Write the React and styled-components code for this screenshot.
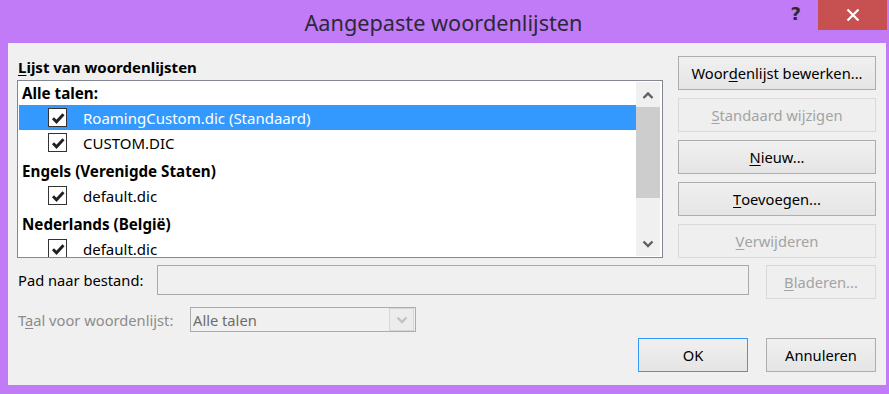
import React from "react";
import styled, { createGlobalStyle } from "styled-components";

const GlobalStyle = createGlobalStyle`
  html, body {
    margin: 0;
    padding: 0;
    background: #c27bf7;
    font-family: "Noto Sans", "Open Sans", sans-serif;
  }
`;

const Window = styled.div`
  display: flex;
  flex-direction: column;
  width: 889px;
  height: 394px;
  background: #c27bf7;
`;

const TitleBar = styled.div`
  display: grid;
  grid-template-columns: 1fr auto 1fr;
  height: 43px;
  padding-right: 2px;
`;

const Title = styled.div`
  grid-column: 2;
  align-self: center;
  font-size: 21.7px;
  color: #2b2838;
  padding-top: 1px;
`;

const Controls = styled.div`
  grid-column: 3;
  display: flex;
  justify-content: flex-end;
  align-items: flex-start;
`;

const Help = styled.div`
  font-family: "DejaVu Sans", sans-serif;
  font-weight: bold;
  font-size: 18px;
  color: #2b2b2b;
  margin-top: 3px;
  margin-right: 17px;
`;

const Close = styled.div`
  display: flex;
  align-items: center;
  justify-content: center;
  width: 69px;
  height: 30px;
  background: #c75050;
`;

const Content = styled.div`
  flex: 1;
  display: flex;
  flex-direction: column;
  margin: 0 3px 9px 8px;
  padding: 13px 10px 13px 9px;
  background: #f0f0f0;
  color: #000;
  font-size: 14.7px;
`;

const Upper = styled.div`
  display: grid;
  grid-template-columns: 1fr 198px;
  column-gap: 15px;
`;

const ListColumn = styled.div`
  display: flex;
  flex-direction: column;
`;

const GroupLabel = styled.div`
  font-weight: bold;
  font-size: 15px;
  line-height: 20px;
  margin: 1px 0 3px 1px;
`;

const Key = styled.span`
  text-decoration: underline;
  text-underline-offset: 2px;
`;

const ListBox = styled.div`
  display: flex;
  height: 176px;
  border: 1px solid #828790;
  background: #fff;
  overflow: hidden;
`;

const Items = styled.div`
  flex: 1;
  padding: 0 0 0 1px;
`;

const Header = styled.div`
  display: flex;
  align-items: center;
  box-sizing: border-box;
  height: ${(p) => (p.$first ? 24 : 28)}px;
  padding: ${(p) => (p.$first ? 0 : 4)}px 0 0 3px;
  font-weight: bold;
  font-size: 15.2px;
`;

const Item = styled.div`
  display: flex;
  align-items: center;
  gap: 16px;
  height: 25px;
  padding-left: 29px;
  background: ${(p) => (p.$selected ? "#3399ff" : "transparent")};
  color: ${(p) => (p.$selected ? "#fff" : "#000")};
  font-size: 15px;
`;

const Box = styled.div`
  display: flex;
  align-items: center;
  justify-content: center;
  width: 17px;
  height: 17px;
  border: 1px solid #333;
  background: #fff;
`;

const ScrollBar = styled.div`
  display: flex;
  flex-direction: column;
  width: 24px;
  margin: 1px 2px 1px 0;
  background: #f0f0f0;
`;

const Arrow = styled.div`
  display: flex;
  align-items: center;
  justify-content: center;
  height: 25px;
`;

const Thumb = styled.div`
  height: 91px;
  background: #cdcdcd;
`;

const Track = styled.div`
  flex: 1;
`;

const ButtonColumn = styled.div`
  display: flex;
  flex-direction: column;
  gap: 8px;
`;

const Button = styled.div`
  display: flex;
  align-items: center;
  justify-content: center;
  box-sizing: border-box;
  height: 34px;
  width: ${(p) => p.$width || "auto"};
  border: 1px solid ${(p) => (p.$disabled ? "#d9d9d9" : p.$default ? "#3399ff" : "#adadad")};
  background: ${(p) =>
    p.$disabled ? "#efefef" : "linear-gradient(#f0f0f0, #e5e5e5)"};
  color: ${(p) => (p.$disabled ? "#a3a3a3" : "#000")};
  white-space: nowrap;
`;

const PathRow = styled.div`
  display: grid;
  grid-template-columns: 123px 1fr 110px;
  column-gap: 17px;
  align-items: start;
  margin-top: 7px;
`;

const FieldLabel = styled.div`
  align-self: center;
  padding-left: 1px;
  white-space: nowrap;
  color: ${(p) => (p.$disabled ? "#8c8c8c" : "#000")};
  margin-top: ${(p) => p.$offset || 0}px;
`;

const TextField = styled.div`
  height: 28px;
  border: 1px solid #a9a9a9;
  background: #f0f0f0;
`;

const LangRow = styled.div`
  display: grid;
  grid-template-columns: 173px 226px;
  align-items: center;
  margin-top: 8px;
`;

const Select = styled.div`
  display: flex;
  align-items: center;
  box-sizing: border-box;
  height: 25px;
  border: 1px solid #acacac;
  background: #f0f0f0;
  color: #6d6d6d;
`;

const SelectValue = styled.div`
  flex: 1;
  padding-left: 2px;
`;

const SelectButton = styled.div`
  display: flex;
  align-items: center;
  justify-content: center;
  width: 23px;
  height: 21px;
  margin-right: 1px;
  border: 1px solid #d6d6d6;
  background: #ececec;
`;

const Footer = styled.div`
  display: flex;
  justify-content: flex-end;
  gap: 18px;
  margin-top: 6px;
`;

const Check = () => (
  <svg width="14" height="12" viewBox="0 0 14 12">
    <path d="M2 6.3 L5.5 9.8 L12.5 2.3" fill="none" stroke="#222" strokeWidth="2.9" />
  </svg>
);

const Chevron = ({ up, color = "#606060" }) => (
  <svg width="12" height="8" viewBox="0 0 12 8">
    <path
      d={up ? "M1.5 7 L6 2.5 L10.5 7" : "M1.5 1.5 L6 6 L10.5 1.5"}
      fill="none"
      stroke={color}
      strokeWidth="2.4"
    />
  </svg>
);

const Entry = ({ name, selected }) => (
  <Item $selected={selected}>
    <Box>
      <Check />
    </Box>
    {name}
  </Item>
);

const App = () => {
  return (
    <Window>
      <GlobalStyle />
      <TitleBar>
        <Title>Aangepaste woordenlijsten</Title>
        <Controls>
          <Help>?</Help>
          <Close>
            <svg width="14" height="14" viewBox="0 0 14 14">
              <path d="M1.5 1.5 L12.5 12.5 M12.5 1.5 L1.5 12.5" stroke="#fff" strokeWidth="2.2" />
            </svg>
          </Close>
        </Controls>
      </TitleBar>

      <Content>
        <Upper>
          <ListColumn>
            <GroupLabel>
              <Key>L</Key>ijst van woordenlijsten
            </GroupLabel>
            <ListBox>
              <Items>
                <Header $first>Alle talen:</Header>
                <Entry name="RoamingCustom.dic (Standaard)" selected />
                <Entry name="CUSTOM.DIC" />
                <Header>Engels (Verenigde Staten)</Header>
                <Entry name="default.dic" />
                <Header>Nederlands (België)</Header>
                <Entry name="default.dic" />
              </Items>
              <ScrollBar>
                <Arrow>
                  <Chevron up />
                </Arrow>
                <Thumb />
                <Track />
                <Arrow>
                  <Chevron />
                </Arrow>
              </ScrollBar>
            </ListBox>
          </ListColumn>

          <ButtonColumn>
            <Button>
              Woor<Key>d</Key>enlijst bewerken...
            </Button>
            <Button $disabled>
              <Key>S</Key>tandaard wijzigen
            </Button>
            <Button>
              <Key>N</Key>ieuw...
            </Button>
            <Button>
              <Key>T</Key>oevoegen...
            </Button>
            <Button $disabled>
              <Key>V</Key>erwijderen
            </Button>
          </ButtonColumn>
        </Upper>

        <PathRow>
          <FieldLabel $offset={-4}>Pad naar bestand:</FieldLabel>
          <TextField />
          <Button $disabled>
            <Key>B</Key>laderen...
          </Button>
        </PathRow>

        <LangRow>
          <FieldLabel $disabled>
            T<Key>a</Key>al voor woordenlijst:
          </FieldLabel>
          <Select>
            <SelectValue>Alle talen</SelectValue>
            <SelectButton>
              <Chevron color="#c2c2c2" />
            </SelectButton>
          </Select>
        </LangRow>

        <Footer>
          <Button $default $width="110px">OK</Button>
          <Button $width="110px">Annuleren</Button>
        </Footer>
      </Content>
    </Window>
  );
};

export default App;
